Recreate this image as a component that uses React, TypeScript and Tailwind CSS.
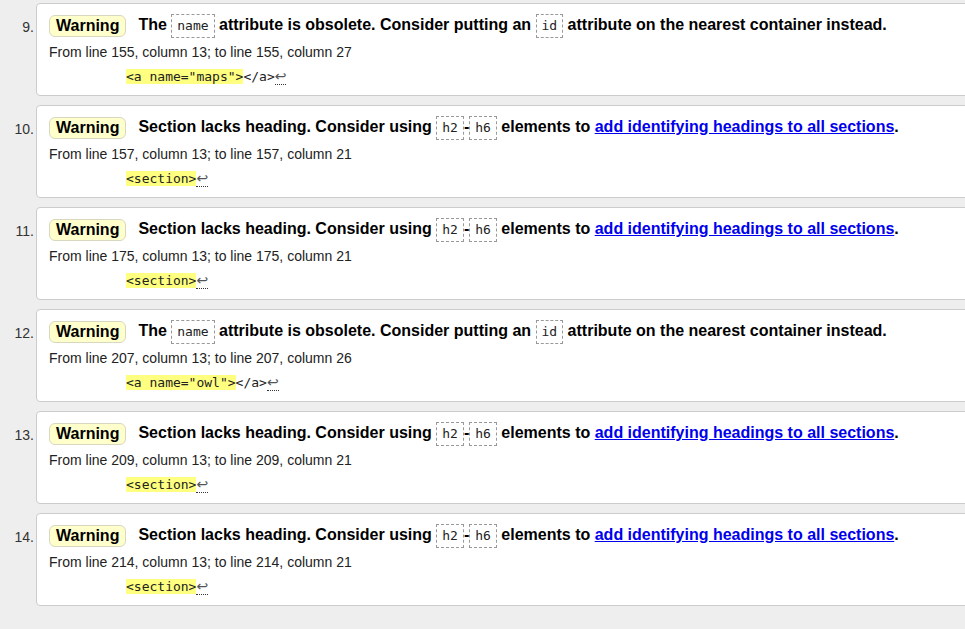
import React from "react";

const Code = ({ children }: { children: React.ReactNode }) => (
  <code className="inline-block border border-dashed border-[#999] px-[5px] leading-[22px] text-[13px] font-normal text-[#222]" style={{ fontFamily: '"DejaVu Sans Mono", "Liberation Mono", monospace' }}>
    {children}
  </code>
);

type Item = { n: number; kind: "name" | "section"; from: string; snippet: string; rest?: string };

const items: Item[] = [
  { n: 9, kind: "name", from: "From line 155, column 13; to line 155, column 27", snippet: '<a name="maps">', rest: "</a>" },
  { n: 10, kind: "section", from: "From line 157, column 13; to line 157, column 21", snippet: "<section>" },
  { n: 11, kind: "section", from: "From line 175, column 13; to line 175, column 21", snippet: "<section>" },
  { n: 12, kind: "name", from: "From line 207, column 13; to line 207, column 26", snippet: '<a name="owl">', rest: "</a>" },
  { n: 13, kind: "section", from: "From line 209, column 13; to line 209, column 21", snippet: "<section>" },
  { n: 14, kind: "section", from: "From line 214, column 13; to line 214, column 21", snippet: "<section>" },
];

export default function App() {
  return (
    <div className="w-[965px] h-[629px] overflow-hidden bg-[#eeeeee] pt-[3px]" style={{ fontFamily: '"Liberation Sans", Arial, sans-serif' }}>
      <div className="flex flex-col gap-[9px] mr-[-30px]">
        {items.map((it) => (
          <div key={it.n} className="flex">
            <div className="w-[35px] shrink-0 pt-[13px] pr-[1px] text-right text-[14px] leading-[22px] text-[#333]">{it.n}.</div>
            <div className="flex-1 ml-[1px] bg-white border border-[#cccccc] rounded-[4px] pl-[12px] pt-[9px] pb-[10px] h-[93px]">
              <div className="flex items-center text-[16px] font-bold text-black leading-[24px] whitespace-nowrap">
                <span className="inline-block bg-[#ffffcc] border border-[#d8d8c0] rounded-[6px] px-[6px] leading-[20px] mr-[12px]">Warning</span>
                {it.kind === "name" ? (
                  <span>
                    The <Code>name</Code> attribute is obsolete. Consider putting an <Code>id</Code> attribute on the nearest container instead.
                  </span>
                ) : (
                  <span>
                    Section lacks heading. Consider using <Code>h2</Code>-<Code>h6</Code> elements to{" "}
                    <a href="#" className="text-[#0000ee] underline">add identifying headings to all sections</a>.
                  </span>
                )}
              </div>
              <div className="mt-[5px] text-[14px] leading-[18px] text-[#222]">{it.from}</div>
              <div className="mt-[7px] pl-[77px] text-[13px] leading-[17px] text-[#222]" style={{ fontFamily: '"DejaVu Sans Mono", "Liberation Mono", monospace' }}>
                <span className="bg-[#ffff80]">{it.snippet}</span>
                {it.rest && <span>{it.rest}</span>}
                <span className="inline-block border-b border-dotted border-[#333] leading-[15px] text-[14px] text-[#555]" style={{ fontFamily: '"DejaVu Sans", sans-serif' }}>↩</span>
              </div>
            </div>
          </div>
        ))}
      </div>
    </div>
  );
}
